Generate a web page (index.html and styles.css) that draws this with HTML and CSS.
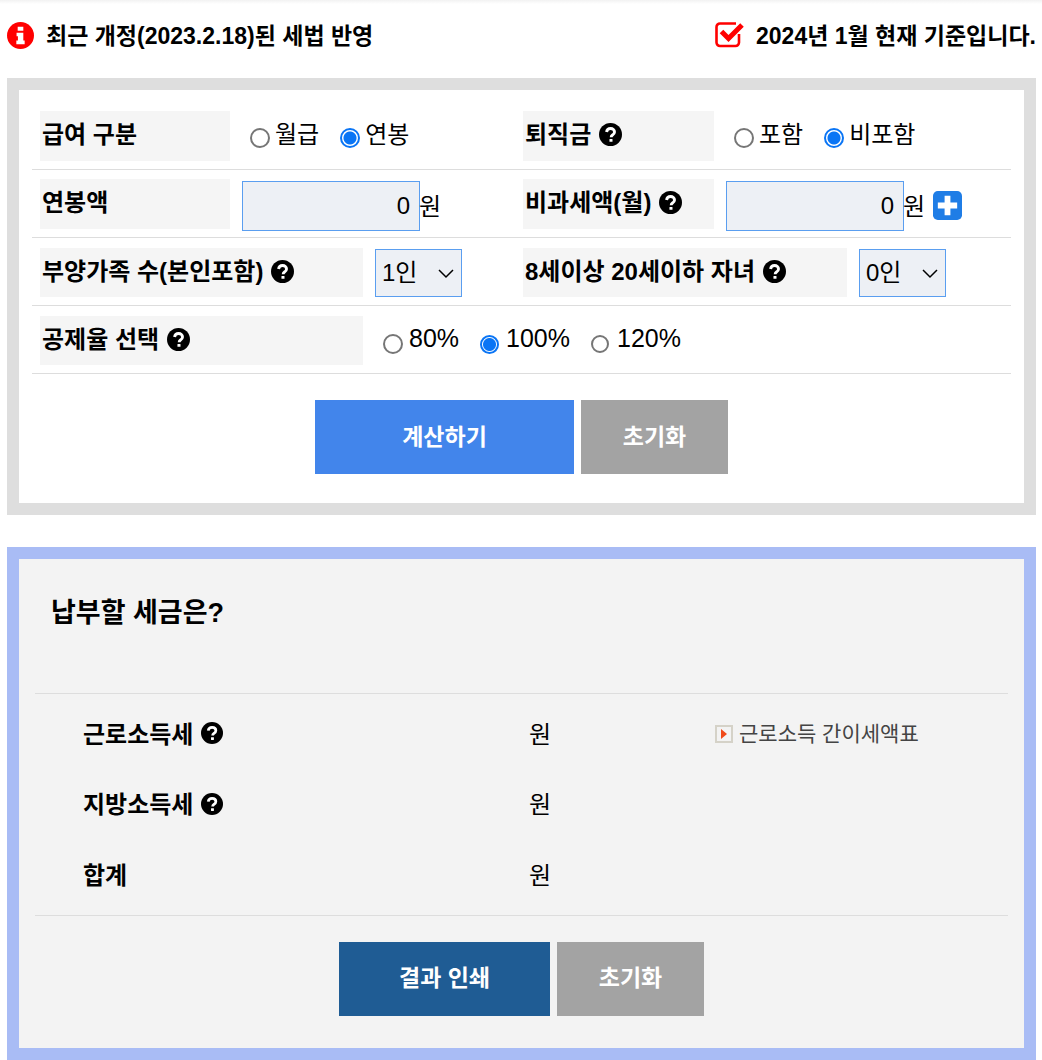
FILE: index.html
```html
<!DOCTYPE html>
<html lang="ko">
<head>
    <meta charset="UTF-8">
    <title>근로소득세 계산기</title>
    <link rel="stylesheet" href="styles.css">
</head>
<body>
    <svg class="icon-defs" width="0" height="0">
        <symbol id="icon-help" viewBox="0 0 24 24">
            <circle cx="12" cy="12" r="12" fill="#000"/>
            <path d="M7.900 9.400c.3-2.400 2-3.600 4.200-3.600 2.400 0 4.100 1.500 4.100 3.500 0 1.600-.9 2.400-2.100 3.200-1 .7-1.400 1.100-1.400 2.300" fill="none" stroke="#fff" stroke-width="3"/>
            <rect x="10.900" y="16.600" width="3.200" height="3" rx=".4" fill="#fff"/>
        </symbol>
    </svg>

    <div class="notice-bar">
        <div class="notice">
            <svg class="notice-icon" viewBox="0 0 24 24">
                <circle cx="12" cy="12" r="12" fill="#f00"/>
                <path d="M9.500 4.300h5v3.400h-5zM8.500 9.500h6v7h1.200v3.300H8.300v-3.300h1.400v-3.800H8.500z" fill="#fff"/>
            </svg>
            <span>최근 개정(2023.2.18)된 세법 반영</span>
        </div>
        <div class="notice">
            <svg class="notice-icon check-icon" viewBox="0 0 30 26">
                <path d="M24 12v8.500a3.500 3.500 0 0 1-3.500 3.500H5a3.500 3.500 0 0 1-3.500-3.500V5A3.500 3.500 0 0 1 5 1.500h16" fill="none" stroke="#f00" stroke-width="2.600"/>
                <path d="M6.500 9.500l7 7L27 3" fill="none" stroke="#f00" stroke-width="5"/>
            </svg>
            <span>2024년 1월 현재 기준입니다.</span>
        </div>
    </div>

    <div class="panel calc-panel">
        <div class="form-row">
            <div class="field">
                <div class="field-label">급여 구분</div>
                <div class="radio-group">
                    <label class="radio"><input type="radio" name="pay"><span>월급</span></label>
                    <label class="radio"><input type="radio" name="pay" checked><span>연봉</span></label>
                </div>
            </div>
            <div class="field">
                <div class="field-label">퇴직금 <svg class="help"><use href="#icon-help"/></svg></div>
                <div class="radio-group">
                    <label class="radio"><input type="radio" name="severance"><span>포함</span></label>
                    <label class="radio"><input type="radio" name="severance" checked><span>비포함</span></label>
                </div>
            </div>
        </div>
        <div class="form-row">
            <div class="field">
                <div class="field-label">연봉액</div>
                <input class="amount" type="text" value="0"><span class="unit">원</span>
            </div>
            <div class="field">
                <div class="field-label">비과세액(월) <svg class="help"><use href="#icon-help"/></svg></div>
                <input class="amount" type="text" value="0"><span class="unit">원</span>
                <svg class="plus-icon" viewBox="0 0 30 30">
                    <rect width="30" height="30" rx="5" fill="#1f7de6"/>
                    <path d="M15 5v20M5 15h20" stroke="#fff" stroke-width="6"/>
                </svg>
            </div>
        </div>
        <div class="form-row">
            <div class="field">
                <div class="field-label wide">부양가족 수(본인포함) <svg class="help"><use href="#icon-help"/></svg></div>
                <div class="select-box">1인<svg class="chevron" viewBox="0 0 16 10"><path d="M1 1l7 7 7-7" fill="none" stroke="#000" stroke-width="1.500"/></svg></div>
            </div>
            <div class="field">
                <div class="field-label wide">8세이상 20세이하 자녀 <svg class="help"><use href="#icon-help"/></svg></div>
                <div class="select-box">0인<svg class="chevron" viewBox="0 0 16 10"><path d="M1 1l7 7 7-7" fill="none" stroke="#000" stroke-width="1.500"/></svg></div>
            </div>
        </div>
        <div class="form-row">
            <div class="field rate-field">
                <div class="field-label wide">공제율 선택 <svg class="help"><use href="#icon-help"/></svg></div>
                <div class="radio-group rate-group">
                    <label class="radio"><input type="radio" name="rate"><span>80%</span></label>
                    <label class="radio"><input type="radio" name="rate" checked><span>100%</span></label>
                    <label class="radio"><input type="radio" name="rate"><span>120%</span></label>
                </div>
            </div>
        </div>
        <div class="button-row">
            <button class="btn btn-calc">계산하기</button>
            <button class="btn btn-reset">초기화</button>
        </div>
    </div>

    <div class="panel result-panel">
        <div class="result-title">납부할 세금은?</div>
        <div class="result-list">
            <div class="result-row">
                <div class="result-label">근로소득세 <svg class="help"><use href="#icon-help"/></svg></div>
                <div class="result-value">원</div>
                <a class="table-link" href="#">
                    <span class="link-icon"></span>근로소득 간이세액표
                </a>
            </div>
            <div class="result-row">
                <div class="result-label">지방소득세 <svg class="help"><use href="#icon-help"/></svg></div>
                <div class="result-value">원</div>
            </div>
            <div class="result-row">
                <div class="result-label">합계</div>
                <div class="result-value">원</div>
            </div>
        </div>
        <div class="button-row">
            <button class="btn btn-print">결과 인쇄</button>
            <button class="btn btn-reset">초기화</button>
        </div>
    </div>
</body>
</html>
```
FILE: styles.css
```css
* {
    box-sizing: border-box;
}
body {
    margin: 0;
    padding: 4px 6px 12px 7px;
    background: linear-gradient(#f2f2f2, #fff 4px) no-repeat;
    font-family: "Liberation Sans", "Noto Sans CJK KR", sans-serif;
    color: #000;
}
.icon-defs {
    position: absolute;
}
.notice-bar {
    display: flex;
    justify-content: space-between;
    align-items: center;
    height: 74px;
    padding-bottom: 12px;
}
.notice {
    display: flex;
    align-items: center;
    font-size: 23px;
    font-weight: bold;
}
.notice span {
    margin-bottom: 2px;
}
.notice-icon {
    width: 27px;
    height: 27px;
    margin-right: 12px;
}
.check-icon {
    width: 30px;
    height: 26px;
    margin-right: 11px;
}
.panel {
    border-width: 12px;
    border-style: solid;
}
.calc-panel {
    height: 437px;
    margin-bottom: 32px;
    padding: 12px 13px 0;
    border-color: #dedede;
    background: #fff;
}
.form-row {
    display: flex;
    height: 68px;
    padding: 9px 8px 0;
    border-bottom: 1px solid #ddd;
}
.field {
    display: flex;
    flex: none;
    width: 483px;
    height: 50px;
    align-items: center;
}
.rate-field {
    width: auto;
}
.field-label {
    display: flex;
    flex: none;
    align-items: center;
    width: 190px;
    height: 50px;
    margin-right: 12px;
    padding: 0 2px 7px;
    background: #f5f5f5;
    font-size: 24px;
    font-weight: bold;
    white-space: pre;
}
.field + .field .field-label {
    width: 191px;
}
.field-label.wide {
    width: 323px;
    height: 49px;
    margin-top: 1px;
}
.field + .field .field-label.wide {
    width: 324px;
}
.help {
    width: 23px;
    height: 23px;
    margin: 4px 0 0 1px;
}
.radio-group {
    display: flex;
    gap: 21px;
    padding-left: 8px;
}
.radio {
    display: flex;
    align-items: center;
    font-size: 24px;
    gap: 5px;
}
.radio span {
    margin-bottom: 7px;
}
.radio input {
    appearance: none;
    flex: none;
    width: 20px;
    height: 20px;
    margin: 4px 0 0;
    border: 2px solid #767676;
    border-radius: 50%;
    background: #fff;
}
.radio input:checked {
    border-color: #0a75f5;
    background: radial-gradient(circle, #0a75f5 0, #0a75f5 6px, #fff 7px);
}
.rate-group {
    margin-top: 4px;
}
.rate-group .radio {
    font-size: 25px;
    gap: 6px;
}
.rate-group .radio:nth-child(2) {
    gap: 7px;
}
.rate-group .radio:nth-child(3) {
    gap: 8px;
}
.rate-group .radio:nth-child(2) input {
    width: 19px;
    height: 19px;
}
.rate-group .radio:nth-child(3) input {
    width: 18px;
    height: 18px;
}
.amount {
    width: 178px;
    height: 50px;
    margin-top: 4px;
    padding: 0 9px 0 0;
    border: 1px solid #5a9ef0;
    background: #edf0f5;
    font-family: inherit;
    font-size: 24px;
    text-align: right;
    color: #000;
}
.unit {
    margin-left: -1px;
    font-size: 24px;
}
.plus-icon {
    width: 29px;
    height: 29px;
    margin: 2px 0 0 8px;
}
.select-box {
    display: flex;
    align-items: center;
    justify-content: space-between;
    width: 87px;
    height: 48px;
    margin-top: 2px;
    padding: 0 7px 6px 6px;
    border: 1px solid #5a9ef0;
    background: #edf0f5;
    font-size: 24px;
}
.chevron {
    width: 16px;
    height: 10px;
    margin-top: 8px;
}
.button-row {
    display: flex;
    justify-content: center;
    gap: 7px;
    margin-top: 26px;
}
.btn {
    height: 74px;
    padding: 0 0 5px;
    border: 0;
    font-family: inherit;
    font-size: 23px;
    font-weight: bold;
    color: #fff;
}
.btn-calc {
    width: 259px;
    background: #4285eb;
}
.btn-print {
    width: 211px;
    background: #1f5c94;
}
.btn-reset {
    width: 147px;
    background: #a3a3a3;
}
.result-panel {
    height: 513px;
    padding: 0 16px;
    border-color: #a9bcf5;
    background: #f3f3f3;
}
.result-title {
    height: 135px;
    padding: 32px 0 0 16px;
    border-bottom: 1px solid #ddd;
    font-size: 27px;
    font-weight: bold;
}
.result-list {
    padding: 3px 0 6px;
    border-bottom: 1px solid #ddd;
}
.result-row {
    display: grid;
    grid-template-columns: 446px 186px 1fr;
    align-items: center;
    height: 70.6px;
    padding-left: 48px;
    font-size: 24px;
}
.result-row .help {
    width: 22px;
    height: 22px;
    margin-top: 2px;
}
.result-label {
    display: flex;
    align-items: center;
    font-weight: bold;
    white-space: pre;
}
.table-link {
    display: flex;
    align-items: center;
    font-size: 21px;
    color: #444;
    text-decoration: none;
}
.link-icon {
    position: relative;
    width: 18px;
    height: 18px;
    margin: 3px 6px 0 0;
    border: 2px solid #d5d2c8;
}
.link-icon::after {
    content: "";
    position: absolute;
    left: 4px;
    top: 2px;
    border-left: 6px solid #f04a1a;
    border-top: 5px solid transparent;
    border-bottom: 5px solid transparent;
}
```
